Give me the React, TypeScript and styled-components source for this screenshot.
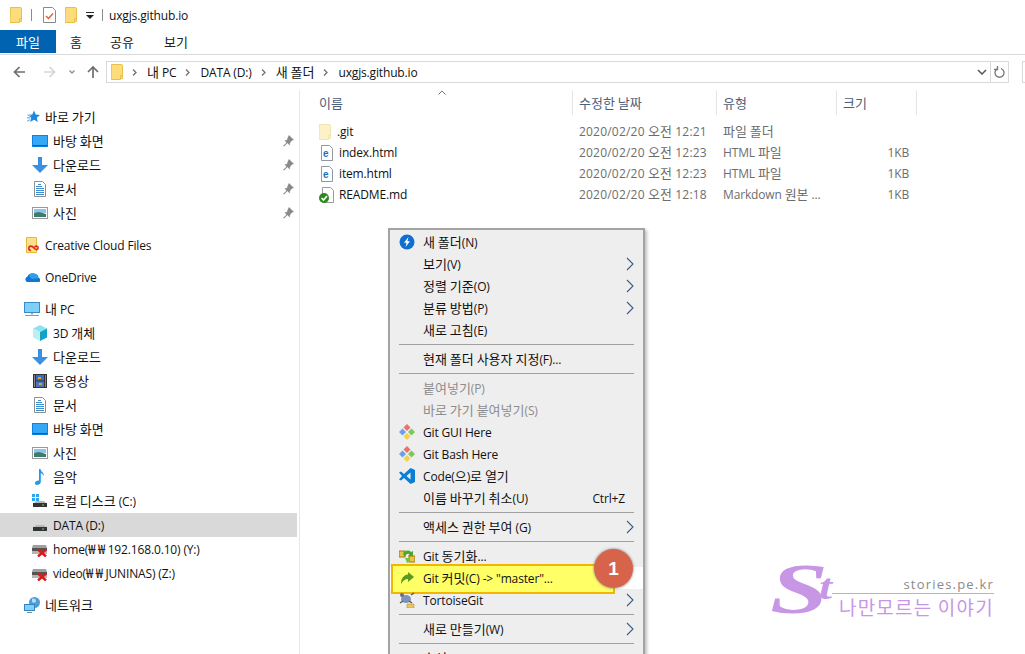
import React from "react";
import styled, { createGlobalStyle } from "styled-components";

const GlobalStyle = createGlobalStyle`
  html, body { margin: 0; padding: 0; background: #fff; }
  body {
    font-family: "Open Sans", "Noto Sans CJK KR", sans-serif;
    font-size: 12px;
    letter-spacing: -0.15px;
    color: #111;
  }
`;

const Ko = styled.span`
  font-family: "Noto Sans CJK KR", sans-serif;
  font-size: 13px;
  line-height: 1;
  letter-spacing: 0;
`;

const Won = styled(Ko)`
  letter-spacing: 2.5px;
`;

// hangul runs get their own size, the windows font has wider hangul than latin
const T: React.FC<{ children: string }> = ({ children }) => (
  <>
    {children
      .split(/([가-힣][가-힣 ]*[가-힣]|[가-힣]|₩+)/)
      .map((part, i) =>
        i % 2 === 0 ? part : part[0] === "₩" ? <Won key={i}>{part}</Won> : <Ko key={i}>{part}</Ko>
      )}
  </>
);

/* ---------- icons ---------- */

const Svg: React.FC<{ w?: number; h?: number; children: React.ReactNode }> = ({ w = 16, h = 16, children }) => (
  <svg width={w} height={h} viewBox={`0 0 ${w} ${h}`} style={{ display: "block", flex: "none" }}>
    {children}
  </svg>
);

const FolderIcon: React.FC<{ pale?: boolean }> = ({ pale }) => (
  <Svg w={14} h={16}>
    <path
      d="M.5 .5h10a1 1 0 0 1 1 1v13h-2v1h-9.500z"
      fill={pale ? "#fdf1c9" : "#fddc7b"}
      stroke={pale ? "#f3e3ae" : "#e9bf47"}
    />
    <path d="M9.500 15v-3.500h2" fill="none" stroke={pale ? "#f3e3ae" : "#e9bf47"} />
  </Svg>
);

const TaskIcon = () => (
  <Svg w={14} h={16}>
    <path d="M.5.5h9l3 3v12h-12z" fill="#fff" stroke="#8a8a8a" />
    <path d="M3 9l2.500 2.500L10 6.500" fill="none" stroke="#e0603a" strokeWidth="1.500" />
  </Svg>
);

const StarIcon = () => (
  <Svg>
    <path d="M10 1.500l1.700 4 4.300.4-3.200 2.900 1 4.200-3.800-2.300-3.800 2.300 1-4.200-3.200-2.900 4.300-.4z" fill="#1f88de" />
    <path d="M3 5.500h3.500l1 1.500H4zM3 8h3l.5 1.500H3zM3 11.500l3-1.500-.3 2-2.700.800z" fill="#7fbdf0" />
  </Svg>
);

const DesktopIcon = () => (
  <Svg>
    <rect x="0" y="2" width="16" height="12" fill="#0a84e0" />
    <rect x="1" y="3" width="14" height="9" fill="#35a8f5" />
    <path d="M1 12.500h14" stroke="#0a5fa8" />
  </Svg>
);

const DownloadIcon = () => (
  <Svg>
    <path d="M6 0h4v8h6l-8 8-8-8h6z" fill="#3b8fe2" />
  </Svg>
);

const DocIcon = () => (
  <Svg>
    <path d="M2.500.5h8l3 3v12h-11z" fill="#fff" stroke="#8f8f8f" />
    <path d="M6 3.500h3M4 5.500h6M4 7.500h8M4 9.500h8M4 11.500h8M4 13.500h8" stroke="#3f8fd0" />
  </Svg>
);

const PictureIcon = () => (
  <Svg>
    <rect x=".5" y="2.500" width="15" height="11" fill="#fff" stroke="#9a9a9a" />
    <rect x="2" y="4" width="12" height="4" fill="#8fc4ec" />
    <path d="M2 8l5-1 7 2v3H2z" fill="#3f7b6c" />
  </Svg>
);

const PinIcon = () => (
  <Svg w={11} h={12}>
    <path d="M6 0l5 5-2 .5L7 8l-.5 2.500L4.500 8 1 11.500 0 11l3.500-3.500L1.500 5.500 4 5l.5-2z" fill="#8a8a8a" />
  </Svg>
);

const CloudFilesIcon = () => (
  <Svg>
    <path d="M2.500.5h10v15h-10z" fill="#fde08c" stroke="#e6b93c" />
    <path
      d="M7 13.500a2.200 2.200 0 0 1 0-4.400c1.500 0 2.500 1.300 3.500 2.400.6.7 1.200 1.200 2.200 1.200a1.900 1.900 0 0 0 0-3.700c-1 0-1.600.5-2.200 1.200"
      fill="none"
      stroke="#da2a20"
      strokeWidth="1.600"
    />
  </Svg>
);

const OneDriveIcon = () => (
  <Svg w={16} h={12}>
    <path d="M3 11h11a2 2 0 0 0 .5-4A4 4 0 0 0 9 3 4 4 0 0 0 3.500 5.500 3 3 0 0 0 3 11z" fill="#0f78d4" />
    <path d="M5 5a4 4 0 0 1 7-1.500 4 4 0 0 1 2.500 3.500L8 8z" fill="#2ea0ea" />
  </Svg>
);

const PcIcon = () => (
  <Svg>
    <rect x=".5" y="1.500" width="15" height="10" fill="#7fd0f8" stroke="#3a8cc8" />
    <path d="M7 12h2v1.500H7z" fill="#8aa" />
    <path d="M1 14.500h14" stroke="#8c9aa5" />
  </Svg>
);

const CubeIcon = () => (
  <Svg>
    <path d="M8 0l7 3.500L8 7 1 3.500z" fill="#8ce2ee" />
    <path d="M1 3.500L8 7v9l-7-3.500z" fill="#bdeef2" />
    <path d="M15 3.500L8 7v9l7-3.500z" fill="#12a4c4" />
  </Svg>
);

const FilmIcon = () => (
  <Svg>
    <rect x="1" y="1" width="14" height="14" fill="#333" />
    <rect x="4" y="2" width="8" height="5.500" fill="#3a6fc0" />
    <rect x="4" y="8.500" width="8" height="5.500" fill="#4a78b8" />
    <path d="M6 4h3v2H6zM7 10h3v2H7z" fill="#e0a030" />
    <path d="M2 3h1M2 5h1M2 7h1M2 9h1M2 11h1M2 13h1M13 3h1M13 5h1M13 7h1M13 9h1M13 11h1M13 13h1" stroke="#ddd" />
  </Svg>
);

const MusicIcon = () => (
  <Svg>
    <path d="M7 0h1.500c.3 2.500 3.500 3.500 3.500 7-1-1.500-2-2.500-3.200-2.800V13c0 2-2.300 3-4 3C3.500 16 3 15 3 14c0-1.500 2-2.800 4-2.500z" fill="#1e9be8" />
  </Svg>
);

const DriveBase = () => (
  <>
    <path d="M2 10l2-2h8l2 2z" fill="#b8b8b8" />
    <rect x="1" y="10" width="14" height="4" fill="#333" />
    <rect x="10" y="11.500" width="2" height="1" fill="#5ae05a" />
  </>
);

const SystemDriveIcon = () => (
  <Svg>
    <path d="M0 1h3v3H0zM4 1h3v3H4zM0 5h3v3H0zM4 5h3v3H4z" fill="#2ca4ee" />
    <DriveBase />
  </Svg>
);

const DriveIcon = () => (
  <Svg>
    <DriveBase />
  </Svg>
);

const NetDriveIcon = () => (
  <Svg>
    <path d="M1 4h13l1 3H0z" fill="#a0a0a0" />
    <rect x="0" y="7" width="15" height="3" fill="#555" />
    <rect x="0" y="10" width="15" height="3" fill="#b5b5b5" />
    <path d="M6 8.500l8 7M14 8.500l-8 7" stroke="#e01818" strokeWidth="2.400" />
  </Svg>
);

const NetworkIcon = () => (
  <Svg>
    <circle cx="10.500" cy="5.500" r="5.500" fill="#4d9bd8" />
    <path d="M8 2c2-1 4 0 4 2s-3 2-4 1z" fill="#b7dcf5" />
    <rect x=".5" y="7.500" width="10" height="6" fill="#7fd0f8" stroke="#2f85c4" />
    <path d="M3 15.500h5" stroke="#7a8c98" />
  </Svg>
);

const HtmlIcon = () => (
  <Svg>
    <path d="M2.500.5h8l3 3v12h-11z" fill="#fff" stroke="#8f9aa5" />
    <text x="4" y="12" fontFamily="Liberation Sans" fontSize="10" fontWeight="700" fill="#1173c7">e</text>
  </Svg>
);

const ReadmeIcon = () => (
  <Svg>
    <path d="M3.500.5h8l3 3v12h-11z" fill="#fff" stroke="#9a9a9a" />
    <circle cx="5" cy="11" r="5" fill="#2b8a1e" />
    <path d="M2.500 11l2 2 3.500-4" fill="none" stroke="#fff" strokeWidth="1.600" />
  </Svg>
);

const NewFolderAppIcon = () => (
  <Svg>
    <circle cx="8" cy="8" r="7.500" fill="#0f6fd0" />
    <path d="M9.500 3L5 8.800h2.600L6.500 13 11 7.200H8.400z" fill="#fff" />
  </Svg>
);

const GitIcon = () => (
  <Svg>
    <path d="M8 0l3.500 3.500L8 7 4.500 3.500z" fill="#e8736c" />
    <path d="M0 8l3.500-3.500L7 8l-3.500 3.500z" fill="#6ea0e6" />
    <path d="M16 8l-3.500-3.500L9 8l3.500 3.500z" fill="#7cc85a" />
    <path d="M8 16l-3.500-3.500L8 9l3.500 3.500z" fill="#f2d24c" />
  </Svg>
);

const VsCodeIcon = () => (
  <Svg>
    <path d="M11.500 0L16 2v12l-4.500 2L5 10l-3 2.500L0 11.500 3 8 0 4.500 2 3.500 5 6zM11.500 4.500L7.500 8l4 3.500z" fill="#0a7fd4" />
  </Svg>
);

const SyncIcon = () => (
  <Svg>
    <rect x="0" y="3" width="6" height="6" fill="#e9c24a" stroke="#a07a10" />
    <rect x="10" y="8" width="6" height="6" fill="#e9c24a" stroke="#a07a10" />
    <path d="M4 6c1-3 5-5 8-2l2-1v5h-5l1.500-1.500C9 5 7 6 6 9z" fill="#4aa82a" />
    <path d="M6 10h5l-1 1.500 1.500 1.500-3.500 2z" fill="#6fc83f" />
  </Svg>
);

const CommitIcon = () => (
  <Svg>
    <path d="M9 2l6 5-6 5V9C6 9 4 10.500 2 14c0-6 3-9 7-9.500z" fill="#5b9a1e" />
  </Svg>
);

const TortoiseIcon = () => (
  <Svg>
    <ellipse cx="7" cy="7" rx="5" ry="4" fill="#7f93b8" />
    <circle cx="3" cy="3" r="2" fill="#5a6f95" />
    <path d="M1 11l3-2M13 11l-3-2M12 3l3-2" stroke="#555" strokeWidth="1.500" />
    <path d="M8 12h7v4H8z" fill="#ecc65a" stroke="#a88420" strokeWidth=".5" />
  </Svg>
);

const Chevron = () => (
  <svg width="8" height="14" viewBox="0 0 8 14" style={{ display: "block", flex: "none" }}>
    <path d="M1 1l6 6-6 6" fill="none" stroke="#3d5a86" strokeWidth="1.100" />
  </svg>
);

const Crumb = () => (
  <svg width="5" height="7" viewBox="0 0 5 7" style={{ display: "block", flex: "none" }}>
    <path d="M1 .5l3 3-3 3" fill="none" stroke="#707070" strokeWidth="1.300" />
  </svg>
);

/* ---------- window chrome ---------- */

const Frame = styled.div`
  position: relative;
  width: 1025px;
  height: 654px;
  overflow: hidden;
  background: #fff;
  display: flex;
  flex-direction: column;
`;

const TitleBar = styled.div`
  height: 30px;
  flex: none;
  display: flex;
  align-items: center;
  padding-left: 10px;
`;

const TitleSep = styled.div<{ $l: number; $r: number }>`
  width: 1px;
  height: 12px;
  background: #8c8c8c;
  margin: 0 ${(p) => p.$r}px 0 ${(p) => p.$l}px;
`;

const TitleGap = styled.div`
  width: 8px;
`;

const QuickDrop = styled.div`
  width: 8px;
  margin: 0 8px 0 7px;
  border-top: 1px solid #222;
  padding-top: 2px;
  display: flex;
  justify-content: center;
  &::after {
    content: "";
    border-left: 4px solid transparent;
    border-right: 4px solid transparent;
    border-top: 4px solid #222;
  }
`;

const TitleText = styled.div`
  font-size: 12px;
  color: #111;
`;

const Tabs = styled.div`
  height: 24px;
  flex: none;
  display: flex;
  border-bottom: 1px solid #dadada;
`;

const Tab = styled.div<{ $active?: boolean; $w: number }>`
  width: ${(p) => p.$w}px;
  height: 23px;
  display: flex;
  align-items: center;
  justify-content: center;
  background: ${(p) => (p.$active ? "#0063b1" : "transparent")};
  color: ${(p) => (p.$active ? "#fff" : "#222")};
`;

const NavRow = styled.div`
  height: 34px;
  margin-bottom: 1px;
  flex: none;
  display: flex;
  align-items: center;
  padding-left: 13px;
`;

const NavButtons = styled.div`
  width: 93px;
  display: flex;
  align-items: center;
  flex: none;
`;

const AddressBox = styled.div`
  width: 903px;
  height: 22px;
  box-sizing: border-box;
  border: 1px solid #d9d9d9;
  display: flex;
  align-items: center;
  padding-left: 4px;
  flex: none;
`;

const Crumbs = styled.div`
  flex: 1;
  display: flex;
  align-items: center;
  gap: 9px;
  color: #111;
  svg:nth-child(2) {
    margin-left: -2px;
  }
`;

const CrumbText = styled.span`
  margin-left: 1px;
`;

const AddressDrop = styled.svg`
  margin-right: 3px;
`;

const AddressEnd = styled.div`
  width: 17px;
  height: 20px;
  border-left: 1px solid #d9d9d9;
  display: flex;
  align-items: center;
  justify-content: center;
`;

const SearchStub = styled.div`
  width: 10px;
  height: 22px;
  margin-left: 13px;
  box-sizing: border-box;
  border: 1px solid #d9d9d9;
  border-right: 0;
  flex: none;
`;

/* ---------- sidebar ---------- */

const Body = styled.div`
  flex: 1;
  display: flex;
  min-height: 0;
`;

const Sidebar = styled.nav`
  width: 300px;
  flex: none;
  box-sizing: border-box;
  padding: 15px 2px 0 0;
  border-right: 1px solid #e8e8e8;
`;

const NavGroup = styled.div`
  margin-bottom: 8px;
`;

const NavItem = styled.div<{ $child?: boolean; $selected?: boolean }>`
  height: 24px;
  display: flex;
  align-items: center;
  gap: 5px;
  padding-left: ${(p) => (p.$child ? 32 : 24)}px;
  padding-right: 3px;
  background: ${(p) => (p.$selected ? "#d9d9d9" : "transparent")};
  color: #111;
`;

const NavLabel = styled.span`
  flex: 1;
  white-space: nowrap;
`;

/* ---------- file list ---------- */

const Content = styled.main`
  flex: 1;
  position: relative;
`;

const columns = "273px 144px 120px 80px";

const ListHeader = styled.div`
  height: 25px;
  display: grid;
  grid-template-columns: ${columns};
  margin-bottom: 6px;
`;

const HeaderCell = styled.div<{ $first?: boolean }>`
  display: flex;
  align-items: center;
  padding-left: ${(p) => (p.$first ? 19 : 6)}px;
  border-right: 1px solid #e5e5e5;
  color: #4c607a;
`;

const SortCaret = styled.svg`
  position: absolute;
  left: 138px;
  top: 0;
  display: block;
`;

const FileRow = styled.div`
  height: 21px;
  display: grid;
  grid-template-columns: ${columns};
  align-items: center;
  color: #6d6d6d;
`;

const NameCell = styled.div`
  display: flex;
  align-items: center;
  gap: 4px;
  padding-left: 19px;
  color: #111;
`;

const InfoCell = styled.div`
  padding-left: 6px;
  white-space: nowrap;
`;

const DateCell = styled(InfoCell)`
  letter-spacing: 0.2px;
`;

const SizeCell = styled.div`
  text-align: right;
  padding-right: 8px;
`;

/* ---------- context menu ---------- */

const Menu = styled.div`
  position: absolute;
  left: 388px;
  top: 228px;
  width: 257px;
  height: 440px;
  box-sizing: border-box;
  padding-top: 1px;
  background: #eeeeee;
  border: 2px solid #a3a3a3;
  border-bottom: 0;
  box-shadow: 2px 2px 3px rgba(0, 0, 0, 0.25);
`;

const MenuRow = styled.div<{ $disabled?: boolean; $marked?: boolean }>`
  position: relative;
  height: 22px;
  display: flex;
  align-items: center;
  padding: 0 9px;
  color: ${(p) => (p.$disabled ? "#8c8c8c" : "#111")};
  background: ${(p) => (p.$marked ? "#fff" : "transparent")};
  ${(p) =>
    p.$marked &&
    `&::before {
      content: "";
      position: absolute;
      left: 1px;
      right: 28px;
      top: -3px;
      bottom: -5px;
      background: #ffff66;
      border: 2px solid #f2b600;
      box-sizing: border-box;
    }`}
`;

const MenuIcon = styled.div`
  position: relative;
  width: 16px;
  height: 16px;
  margin-right: 8px;
  flex: none;
`;

const MenuLabel = styled.span`
  position: relative;
  flex: 1;
  white-space: nowrap;
`;

const Shortcut = styled.span`
  margin-right: 9px;
`;

const MenuSep = styled.div`
  height: 1px;
  margin: 3px 9px;
  background: #a0a0a0;
`;

const Badge = styled.div`
  position: absolute;
  left: 204px;
  top: -18px;
  width: 39px;
  height: 39px;
  border-radius: 50%;
  background: #d6634a;
  color: #fff;
  font: 700 19px "Liberation Sans", sans-serif;
  display: flex;
  align-items: center;
  justify-content: center;
  box-shadow: 0 0 2px 1px rgba(120, 120, 120, 0.5);
`;

/* ---------- watermark ---------- */

const Watermark = styled.div`
  position: absolute;
  left: 770px;
  top: 566px;
  width: 230px;
  height: 58px;
  color: #c797e6;
`;

const MarkS = styled.div`
  position: absolute;
  left: 0;
  top: -13px;
  font: italic 700 72px/72px "Liberation Serif", serif;
  transform: scaleX(1.45);
  transform-origin: left;
`;

const MarkT = styled.div`
  position: absolute;
  left: 49px;
  top: 3px;
  font: italic 700 36px/36px "Liberation Serif", serif;
  transform: scaleX(1.3);
  transform-origin: left;
`;

const MarkSite = styled.div`
  position: absolute;
  right: 6px;
  top: 9px;
  font-size: 13px;
  letter-spacing: 1.200px;
  color: #8a8a8a;
`;

const MarkLine = styled.div`
  position: absolute;
  left: 62px;
  right: 6px;
  top: 27px;
  height: 1px;
  background: #c9a2e9;
`;

const MarkSlogan = styled.div`
  position: absolute;
  left: 69px;
  top: 28px;
  font: 400 19px/26px "Noto Sans CJK KR", sans-serif;
  letter-spacing: 1.200px;
  white-space: nowrap;
`;

/* ---------- data ---------- */

type NavEntry = { icon: React.ReactNode; label: string; child?: boolean; pin?: boolean; selected?: boolean };

const navGroups: NavEntry[][] = [
  [
    { icon: <StarIcon />, label: "바로 가기" },
    { icon: <DesktopIcon />, label: "바탕 화면", child: true, pin: true },
    { icon: <DownloadIcon />, label: "다운로드", child: true, pin: true },
    { icon: <DocIcon />, label: "문서", child: true, pin: true },
    { icon: <PictureIcon />, label: "사진", child: true, pin: true },
  ],
  [{ icon: <CloudFilesIcon />, label: "Creative Cloud Files" }],
  [{ icon: <OneDriveIcon />, label: "OneDrive" }],
  [
    { icon: <PcIcon />, label: "내 PC" },
    { icon: <CubeIcon />, label: "3D 개체", child: true },
    { icon: <DownloadIcon />, label: "다운로드", child: true },
    { icon: <FilmIcon />, label: "동영상", child: true },
    { icon: <DocIcon />, label: "문서", child: true },
    { icon: <DesktopIcon />, label: "바탕 화면", child: true },
    { icon: <PictureIcon />, label: "사진", child: true },
    { icon: <MusicIcon />, label: "음악", child: true },
    { icon: <SystemDriveIcon />, label: "로컬 디스크 (C:)", child: true },
    { icon: <DriveIcon />, label: "DATA (D:)", child: true, selected: true },
    { icon: <NetDriveIcon />, label: "home(₩₩192.168.0.10) (Y:)", child: true },
    { icon: <NetDriveIcon />, label: "video(₩₩JUNINAS) (Z:)", child: true },
  ],
  [{ icon: <NetworkIcon />, label: "네트워크" }],
];

const files = [
  { icon: <FolderIcon pale />, name: ".git", date: "2020/02/20 오전 12:21", type: "파일 폴더", size: "" },
  { icon: <HtmlIcon />, name: "index.html", date: "2020/02/20 오전 12:23", type: "HTML 파일", size: "1KB" },
  { icon: <HtmlIcon />, name: "item.html", date: "2020/02/20 오전 12:23", type: "HTML 파일", size: "1KB" },
  { icon: <ReadmeIcon />, name: "README.md", date: "2020/02/20 오전 12:18", type: "Markdown 원본 ...", size: "1KB" },
];

type MenuEntry =
  | "sep"
  | {
      label: string;
      icon?: React.ReactNode;
      sub?: boolean;
      disabled?: boolean;
      shortcut?: string;
      marked?: boolean;
    };

const menuEntries: MenuEntry[] = [
  { label: "새 폴더(N)", icon: <NewFolderAppIcon /> },
  { label: "보기(V)", sub: true },
  { label: "정렬 기준(O)", sub: true },
  { label: "분류 방법(P)", sub: true },
  { label: "새로 고침(E)" },
  "sep",
  { label: "현재 폴더 사용자 지정(F)..." },
  "sep",
  { label: "붙여넣기(P)", disabled: true },
  { label: "바로 가기 붙여넣기(S)", disabled: true },
  { label: "Git GUI Here", icon: <GitIcon /> },
  { label: "Git Bash Here", icon: <GitIcon /> },
  { label: "Code(으)로 열기", icon: <VsCodeIcon /> },
  { label: "이름 바꾸기 취소(U)", shortcut: "Ctrl+Z" },
  "sep",
  { label: "액세스 권한 부여 (G)", sub: true },
  "sep",
  { label: "Git 동기화...", icon: <SyncIcon /> },
  { label: "Git 커밋(C) -> \"master\"...", icon: <CommitIcon />, marked: true },
  { label: "TortoiseGit", icon: <TortoiseIcon />, sub: true },
  "sep",
  { label: "새로 만들기(W)", sub: true },
  "sep",
  { label: "속성(R)" },
];

export default function App() {
  return (
    <Frame>
      <GlobalStyle />
      <TitleBar>
        <FolderIcon />
        <TitleSep $l={7} $r={11} />
        <TaskIcon />
        <TitleGap />
        <FolderIcon />
        <QuickDrop />
        <TitleSep $l={0} $r={6} />
        <TitleText>uxgjs.github.io</TitleText>
      </TitleBar>

      <Tabs>
        <Tab $active $w={56}>
          <T>파일</T>
        </Tab>
        <Tab $w={40}>
          <T>홈</T>
        </Tab>
        <Tab $w={52}>
          <T>공유</T>
        </Tab>
        <Tab $w={56}>
          <T>보기</T>
        </Tab>
      </Tabs>

      <NavRow>
        <NavButtons>
          <svg width="90" height="14" viewBox="0 0 90 14" style={{ display: "block" }}>
            <path d="M12 7H2M6.500 2L1.500 7l5 5" fill="none" stroke="#6e6e6e" strokeWidth="1.700" />
            <path d="M31 7h10M36.500 2l5 5-5 5" fill="none" stroke="#d6d6d6" strokeWidth="1.700" />
            <path d="M56.500 5.500L59 8l2.500-2.500" fill="none" stroke="#8f8f8f" strokeWidth="1.300" />
            <path d="M80 13V2M75 7l5-5 5 5" fill="none" stroke="#6e6e6e" strokeWidth="1.700" />
          </svg>
        </NavButtons>
        <AddressBox>
          <Crumbs>
            <FolderIcon />
            <Crumb />
            <CrumbText>
              <T>내 PC</T>
            </CrumbText>
            <Crumb />
            <CrumbText>DATA (D:)</CrumbText>
            <Crumb />
            <CrumbText>
              <T>새 폴더</T>
            </CrumbText>
            <Crumb />
            <CrumbText>uxgjs.github.io</CrumbText>
          </Crumbs>
          <AddressDrop width="10" height="6" viewBox="0 0 10 6">
            <path d="M1 1l4 4 4-4" fill="none" stroke="#555" strokeWidth="1.500" />
          </AddressDrop>
          <AddressEnd>
            <svg width="11" height="12" viewBox="0 0 11 12">
              <path d="M3 3a4.500 4.500 0 1 0 4-.5" fill="none" stroke="#777" strokeWidth="1.300" />
              <path d="M3.500 0v3.500H0" fill="none" stroke="#777" strokeWidth="1.300" />
            </svg>
          </AddressEnd>
        </AddressBox>
        <SearchStub />
      </NavRow>

      <Body>
        <Sidebar>
          {navGroups.map((group, g) => (
            <NavGroup key={g}>
              {group.map((entry) => (
                <NavItem key={entry.label} $child={entry.child} $selected={entry.selected}>
                  {entry.icon}
                  <NavLabel>
                    <T>{entry.label}</T>
                  </NavLabel>
                  {entry.pin && <PinIcon />}
                </NavItem>
              ))}
            </NavGroup>
          ))}
        </Sidebar>

        <Content>
          <ListHeader>
            <HeaderCell $first>
              <T>이름</T>
            </HeaderCell>
            <HeaderCell>
              <T>수정한 날짜</T>
            </HeaderCell>
            <HeaderCell>
              <T>유형</T>
            </HeaderCell>
            <HeaderCell>
              <T>크기</T>
            </HeaderCell>
          </ListHeader>
          <SortCaret width="8" height="5" viewBox="0 0 8 5">
            <path d="M.5 4.500L4 1l3.500 3.500" fill="none" stroke="#777" />
          </SortCaret>
          {files.map((f) => (
            <FileRow key={f.name}>
              <NameCell>
                {f.icon}
                {f.name}
              </NameCell>
              <DateCell>
                <T>{f.date}</T>
              </DateCell>
              <InfoCell>
                <T>{f.type}</T>
              </InfoCell>
              <SizeCell>{f.size}</SizeCell>
            </FileRow>
          ))}
        </Content>
      </Body>

      <Menu>
        {menuEntries.map((entry, i) =>
          entry === "sep" ? (
            <MenuSep key={i} />
          ) : (
            <MenuRow key={i} $disabled={entry.disabled} $marked={entry.marked}>
              <MenuIcon>{entry.icon}</MenuIcon>
              <MenuLabel>
                <T>{entry.label}</T>
              </MenuLabel>
              {entry.shortcut && <Shortcut>{entry.shortcut}</Shortcut>}
              {entry.sub && <Chevron />}
              {entry.marked && <Badge>1</Badge>}
            </MenuRow>
          )
        )}
      </Menu>

      <Watermark>
        <MarkS>S</MarkS>
        <MarkT>t</MarkT>
        <MarkSite>stories.pe.kr</MarkSite>
        <MarkLine />
        <MarkSlogan>나만모르는 이야기</MarkSlogan>
      </Watermark>
    </Frame>
  );
}
